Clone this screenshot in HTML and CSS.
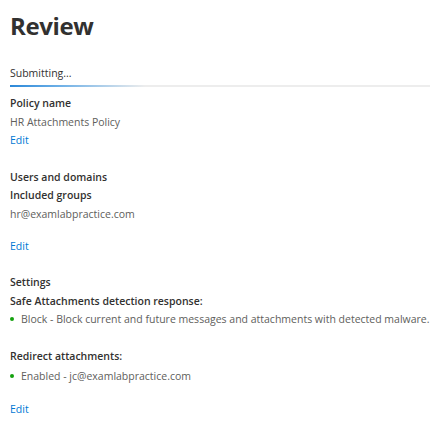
FILE: index.html
```html
<!DOCTYPE html>
<html>
<head>
<meta charset="utf-8">
<link rel="stylesheet" href="styles.css">
</head>
<body>
<main class="page">
  <h1 class="title">Review</h1>
  <div class="status">Submitting...</div>
  <div class="progress"><div class="progress-fill"></div></div>

  <section class="section s-policy">
    <div class="label">Policy name</div>
    <div class="value">HR Attachments Policy</div>
    <a class="edit">Edit</a>
  </section>

  <section class="section s-users">
    <div class="label">Users and domains</div>
    <div class="label">Included groups</div>
    <div class="value">hr@examlabpractice.com</div>
    <a class="edit edit-gap">Edit</a>
  </section>

  <section class="section s-settings">
    <div class="label">Settings</div>
    <div class="label">Safe Attachments detection response:</div>
    <div class="value bullet"><span class="dot"></span>Block - Block current and future messages and attachments with detected malware.</div>
    <div class="label redirect">Redirect attachments:</div>
    <div class="value bullet"><span class="dot"></span>Enabled - jc@examlabpractice.com</div>
    <a class="edit edit-gap2">Edit</a>
  </section>
</main>
</body>
</html>
```

FILE: styles.css
```css
* { box-sizing: border-box; }
html, body { margin: 0; padding: 0; background: #fff; }
body {
  font-family: "Open Sans", "Noto Sans", sans-serif;
  color: #323130;
}
.page {
  padding: 10px 0 0 10px;
  width: 431px;
}
.title {
  margin: 0;
  font-size: 24px;
  line-height: 32px;
  font-weight: 700;
  color: #323130;
  letter-spacing: -0.4px;
}
.status {
  margin-top: 24px;
  font-size: 10.5px;
  line-height: 14px;
  color: #323130;
}
.progress {
  margin-top: 5px;
  height: 2px;
  width: 420px;
  background: #ededed;
}
.progress-fill {
  width: 135px;
  height: 2px;
  background: linear-gradient(to right, #2b88d8 0%, #6aaee6 35%, rgba(237,237,237,0) 100%);
}
.section { display: flex; flex-direction: column; align-items: flex-start; }
.s-policy { margin-top: 7px; }
.s-users { margin-top: 18px; }
.s-settings { margin-top: 18px; }
.label, .value, .edit {
  font-size: 10.5px;
  line-height: 18.5px;
  white-space: nowrap;
}
.label { font-weight: 600; color: #323130; }
.value { color: #605e5c; }
.edit { color: #0078d4; text-decoration: none; }
.edit-gap { margin-top: 13.5px; }
.edit-gap2 { margin-top: 14.5px; }
.redirect { margin-top: 18.5px; margin-bottom: 1.5px; }
.bullet { display: flex; align-items: center; }
.dot {
  width: 4px; height: 4px; border-radius: 50%;
  background: #13a10e;
  margin-right: 7px;
  flex: none;
}
```
